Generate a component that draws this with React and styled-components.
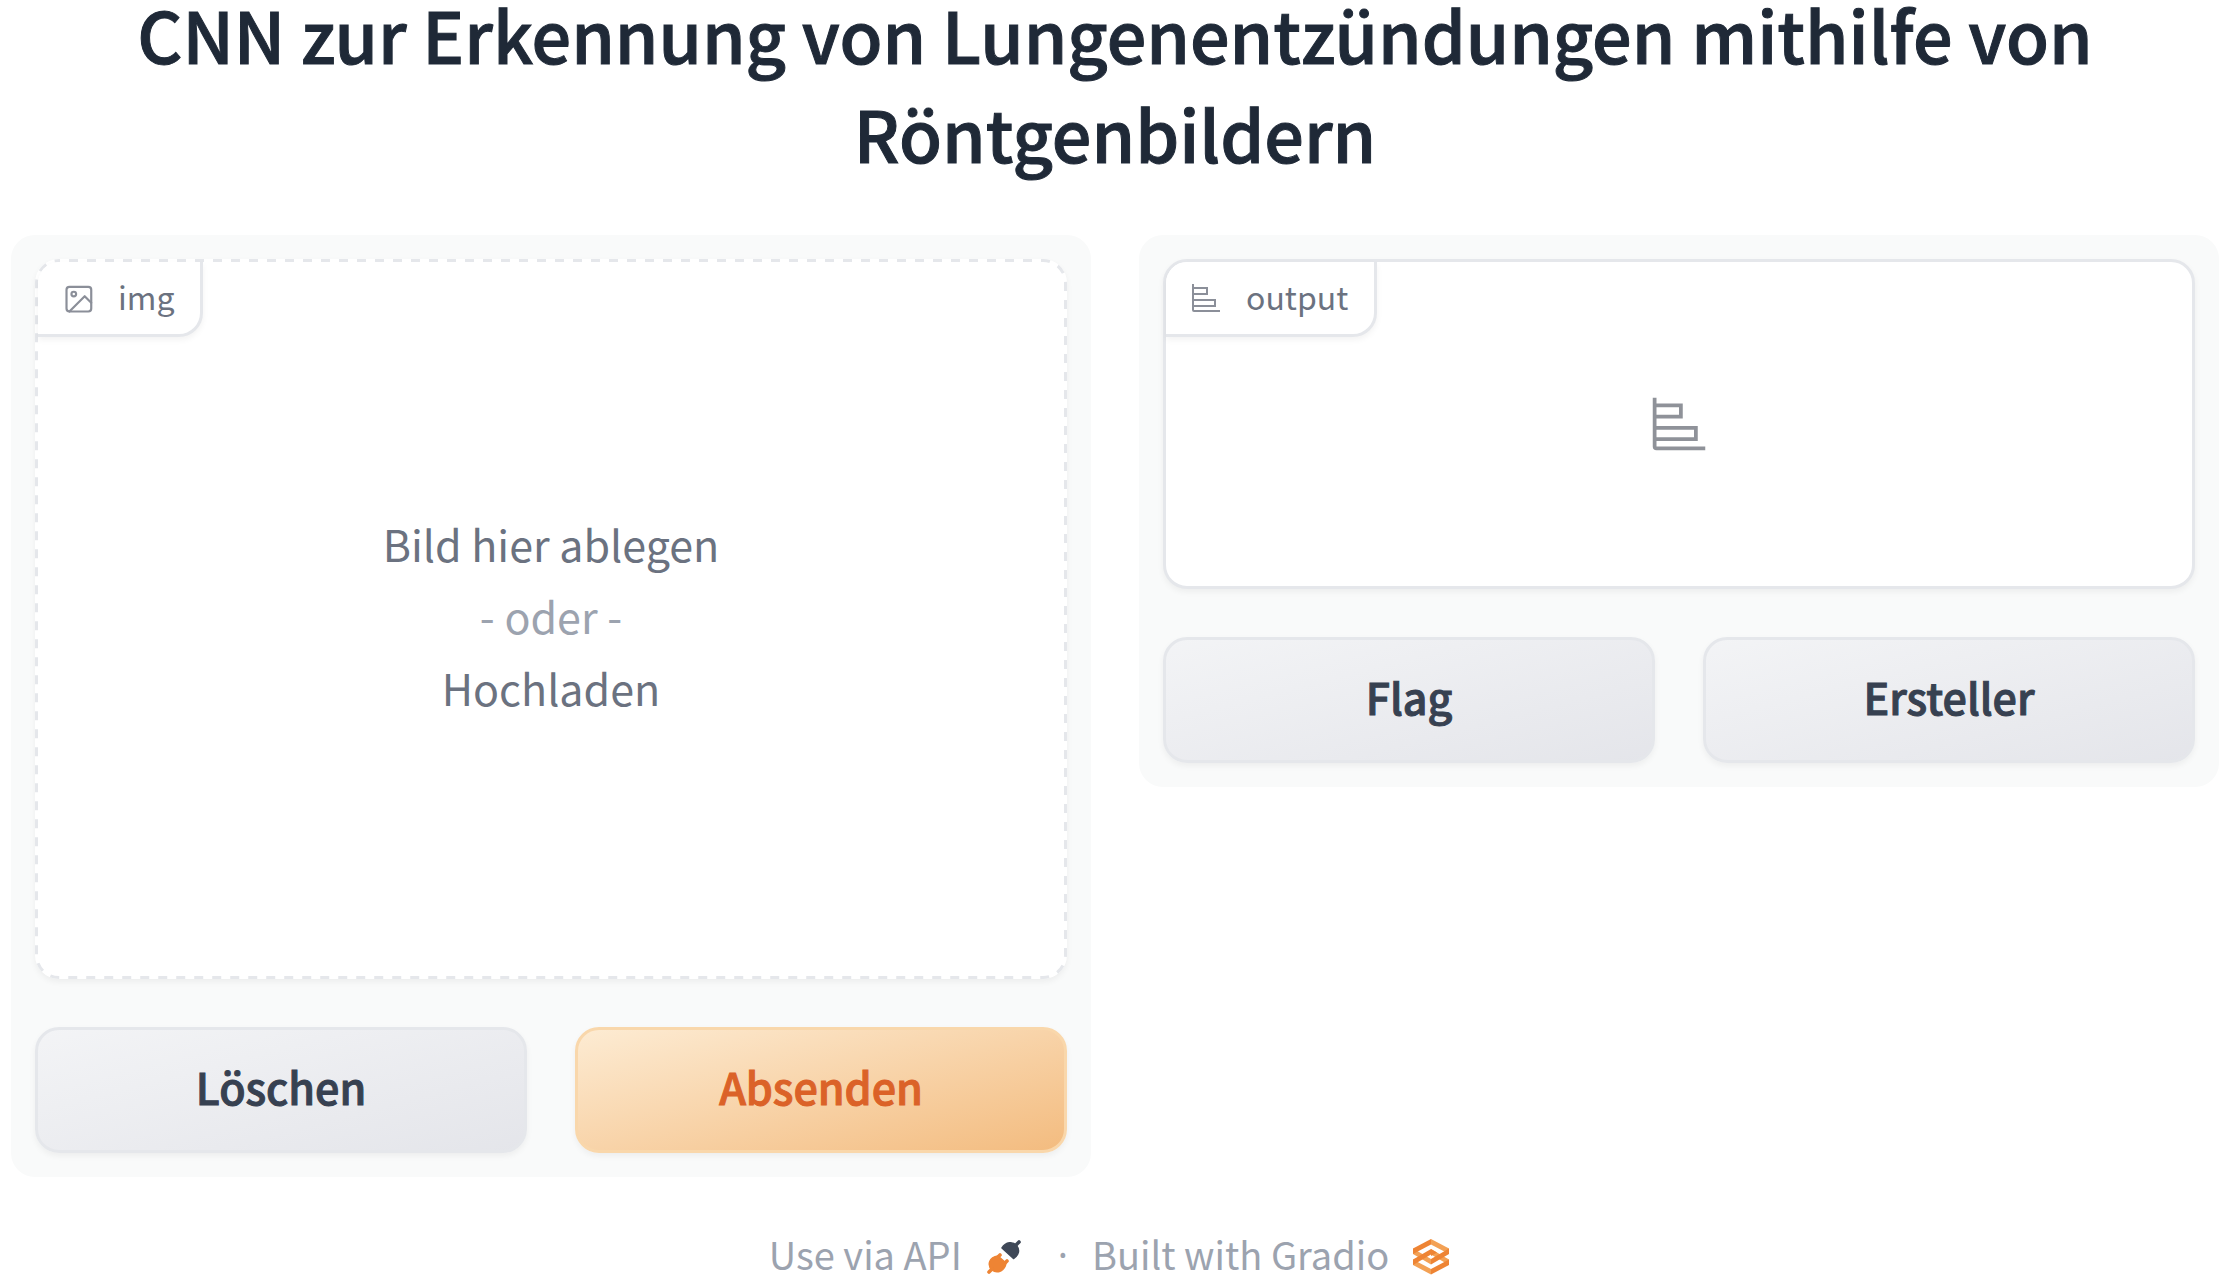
import React from "react";
import styled, { createGlobalStyle } from "styled-components";

const Global = createGlobalStyle`
  *, *::before, *::after { box-sizing: border-box; }
  body {
    margin: 0;
    background: #ffffff;
    overflow: hidden;
    font-family: "Noto Sans CJK SC", "Noto Sans", sans-serif;
  }
  button { font-family: inherit; cursor: pointer; }
`;

const Page = styled.main`
  padding: 0 20px 0 11px;
`;

const Title = styled.h1`
  margin: -16px 0 53px;
  font-size: 70px;
  line-height: 99px;
  font-weight: 500;
  -webkit-text-stroke: 1px currentColor;
  text-align: center;
  color: #1f2937;
`;

const Columns = styled.div`
  display: grid;
  grid-template-columns: 1fr 1fr;
  align-items: start;
  gap: 48px;
`;

const Panel = styled.section`
  display: flex;
  flex-direction: column;
  gap: 48px;
  padding: 24px;
  border-radius: 24px;
  background: #f9fafa;
`;

const Block = styled.div`
  display: flex;
  flex-direction: column;
  height: ${(p) => p.$height};
  border: 3px solid ${(p) => (p.$dashed ? "#ffffff" : "#e5e7eb")};
  border-radius: 24px;
  background: #ffffff;
  box-shadow: 0 3px 6px rgba(0, 0, 0, 0.05);
  position: relative;
`;

const DashedOutline = styled.svg`
  position: absolute;
  top: -3px;
  left: -3px;
  width: calc(100% + 6px);
  height: calc(100% + 6px);
  pointer-events: none;

  rect {
    x: 1.5px;
    y: 1.5px;
    width: calc(100% - 3px);
    height: calc(100% - 3px);
    rx: 22.5px;
    fill: none;
    stroke: #e5e7eb;
    stroke-width: 3px;
    stroke-dasharray: 9 9;
    stroke-dashoffset: 8px;
  }
`;

const Label = styled.div`
  position: absolute;
  top: 0;
  left: 0;
  display: flex;
  align-items: center;
  gap: 24px;
  height: 75px;
  padding: 0 26px 0 24px;
  border: solid #e5e7eb;
  border-width: 0 3px 3px 0;
  border-radius: 21px 0 24px 0;
  background: #ffffff;
  box-shadow: 0 3px 6px rgba(0, 0, 0, 0.05);
  font-size: 32px;
  line-height: 48px;
  color: #6b7280;

  svg { color: #8b8f99; }
  span { padding-bottom: 4px; }
`;

const DropZone = styled.button`
  flex: 1;
  display: flex;
  flex-direction: column;
  align-items: center;
  justify-content: center;
  padding: 0 0 8px;
  border: 0;
  background: none;
  font-size: 43px;
  line-height: 72px;
  color: #6b7280;
`;

const Muted = styled.span`
  color: #9ca3af;
`;

const Empty = styled.div`
  flex: 1;
  display: flex;
  align-items: center;
  justify-content: center;
  color: #8f9299;
`;

const Actions = styled.div`
  display: grid;
  grid-template-columns: 1fr 1fr;
  gap: 48px;
`;

const Button = styled.button`
  height: 126px;
  padding: 0 0 8px;
  border: 3px solid ${(p) => (p.$primary ? "#f9d7ab" : "#e5e7eb")};
  border-radius: 24px;
  background: ${(p) =>
    p.$primary
      ? "linear-gradient(to bottom right, #fdecd4, #f3bb7e) border-box"
      : "linear-gradient(to bottom right, #f3f4f6, #e4e5ea) border-box"};
  box-shadow: 0 3px 6px rgba(0, 0, 0, 0.05);
  font-size: 43px;
  line-height: 72px;
  font-weight: 500;
  -webkit-text-stroke: 1px currentColor;
  color: ${(p) => (p.$primary ? "#db6228" : "#374151")};
`;

const Footer = styled.footer`
  display: flex;
  align-items: center;
  justify-content: center;
  gap: 24px;
  margin-top: 48px;
  font-size: 38px;
  line-height: 58px;
  color: #9ca3af;

  span { padding-bottom: 6px; }
`;

const FooterLink = styled.a`
  display: flex;
  align-items: center;
  gap: 24px;
  color: inherit;
  text-decoration: none;

  svg { margin-right: 12px; }
`;

const Dot = styled.span`
  font-family: "Noto Sans", sans-serif;
`;

const ImageIcon = () => (
  <svg width="32" height="32" viewBox="-0.1 -0.3 22 22" fill="none" stroke="currentColor" strokeWidth="1.5" strokeLinecap="round" strokeLinejoin="round" aria-hidden="true">
    <rect x="3" y="3" width="17" height="17" rx="2" />
    <circle cx="8" cy="8" r="1.6" />
    <path d="M20 14l-4.5-4.5L5 20" />
  </svg>
);

const ChartIcon = ({ size }) => (
  <svg width={size} height={size} viewBox="0 0 32 32" fill="currentColor" aria-hidden="true">
    <path d="M4 2H2v26a2 2 0 0 0 2 2h26v-2H4v-3h22v-8H4v-4h14V5H4zm20 17v4H4v-4zM16 7v4H4V7z" />
  </svg>
);

const PlugIcon = () => (
  <svg width="36" height="36" viewBox="0 0 36 36" aria-hidden="true">
    <g strokeLinecap="round" strokeLinejoin="round">
      <path d="M16 9C20 2.500 27 2.500 30.500 6.500C34 11 33 16 27.500 19.500Z" fill="#3f4857" stroke="#3f4857" strokeWidth="1.500" />
      <path d="M30 6L33 3" stroke="#3f4857" strokeWidth="3.600" />
      <path d="M12 17C3 18 1 26 6 31C11 35 19 32 20 24Z" fill="#ee8434" stroke="#ee8434" strokeWidth="1.500" />
      <path d="M6 30L3 33M11 19L14 16M18 25L21 22" stroke="#ee8434" strokeWidth="3.600" />
    </g>
  </svg>
);

const GradioIcon = () => (
  <svg width="36" height="36" viewBox="0 0 36 36" aria-hidden="true">
    <g fill="#f3a155">
      <path d="M18 0L36 9.500V15L18 5.500Z" />
      <path d="M0 9.500L18 20V25.500L0 15Z" />
      <path d="M18 10L36 20.500V26L18 15.500Z" />
      <path d="M0 20.500L18 30V35.500L0 26Z" />
    </g>
    <g fill="#ee8434">
      <path d="M0 9.500L18 0V5.500L0 15Z" />
      <path d="M0 20.500L18 10V15.500L0 26Z" />
      <path d="M36 9.500L18 20V25.500L36 15Z" />
      <path d="M36 20.500L18 30V35.500L36 26Z" />
      <path d="M18 10L24 13.500L18 17Z" />
    </g>
  </svg>
);

export default function App() {
  return (
    <>
      <Global />
      <Page>
        <Title>CNN zur Erkennung von Lungenentzündungen mithilfe von Röntgenbildern</Title>
        <Columns>
          <Panel>
            <Block $dashed $height="720px">
              <DashedOutline aria-hidden="true"><rect /></DashedOutline>
              <DropZone type="button">
                <span>Bild hier ablegen</span>
                <Muted>- oder -</Muted>
                <span>Hochladen</span>
              </DropZone>
              <Label><ImageIcon /><span>img</span></Label>
            </Block>
            <Actions>
              <Button type="button">Löschen</Button>
              <Button type="button" $primary>Absenden</Button>
            </Actions>
          </Panel>
          <Panel>
            <Block $height="330px">
              <Empty><ChartIcon size={60} /></Empty>
              <Label><ChartIcon size={32} /><span>output</span></Label>
            </Block>
            <Actions>
              <Button type="button">Flag</Button>
              <Button type="button">Ersteller</Button>
            </Actions>
          </Panel>
        </Columns>
        <Footer>
          <FooterLink href="#api"><span>Use via API</span><PlugIcon /></FooterLink>
          <Dot>·</Dot>
          <FooterLink href="#gradio"><span>Built with Gradio</span><GradioIcon /></FooterLink>
        </Footer>
      </Page>
    </>
  );
}
